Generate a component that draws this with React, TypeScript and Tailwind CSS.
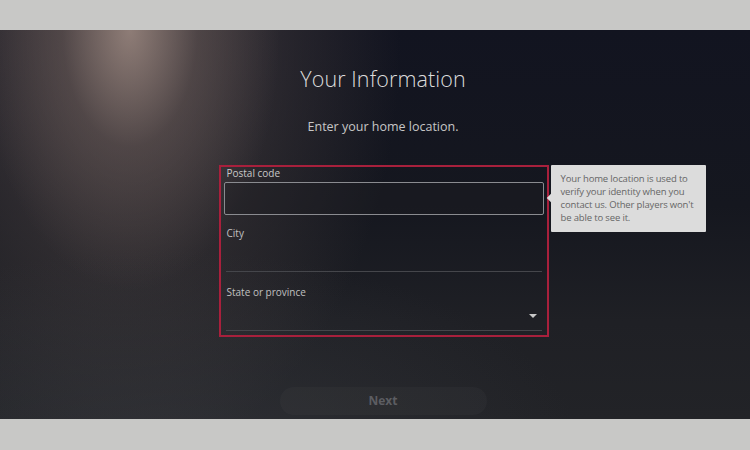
export default function App() {
  return (
    <div
      className="w-[750px] h-[450px] flex flex-col bg-[#c8c8c6] overflow-hidden"
      style={{ fontFamily: '"Open Sans", "Noto Sans", sans-serif' }}
    >
      <div className="h-[30px] shrink-0" />
      <div className="relative h-[389px] shrink-0 overflow-hidden bg-[linear-gradient(180deg,#121420_0%,#15171f_45%,#1f2025_75%,#222327_100%)]">
        {/* spotlight */}
        <div className="absolute inset-0 bg-[radial-gradient(ellipse_330px_500px_at_120px_10px,rgba(95,82,80,0.7),rgba(70,62,62,0.35)_55%,transparent_85%)]" />
        <div className="absolute inset-0 bg-[radial-gradient(ellipse_150px_260px_at_130px_0px,rgba(160,140,132,0.8),rgba(110,95,92,0.4)_45%,transparent_100%)]" />
        <div className="absolute inset-0 bg-[radial-gradient(ellipse_420px_200px_at_160px_420px,rgba(60,62,68,0.45),transparent_100%)]" />

        <div className="relative flex flex-col items-center pl-[16px]">
          <h1 className="mt-[33px] text-[21.5px] font-light text-[#dcdcdc] leading-[32px] tracking-[0.1px]">
            Your Information
          </h1>
          <p className="mt-[23px] text-[12.5px] text-[#c6c6c6] leading-[18px]">
            Enter your home location.
          </p>

          <div className="relative mt-[29px] ml-[1px] flex">
            <div className="w-[330px] h-[172px] border-2 border-[#a8203c] px-[3px] flex flex-col">
              <span className="mt-[-1px] ml-[3px] text-[10px] text-[#c8c8c8] leading-[14px]">Postal code</span>
              <div className="mt-[2px] h-[33px] rounded-[2px] border border-[#8a8b90] bg-[rgba(30,30,34,0.4)]" />
              <span className="mt-[11px] ml-[3px] text-[10px] text-[#c0c0c0] leading-[14px]">City</span>
              <div className="mt-[31px] mx-[2px] h-px bg-[#45464b]" />
              <span className="mt-[13px] ml-[3px] text-[10px] text-[#c0c0c0] leading-[14px]">State or province</span>
              <div className="mt-[15px] mr-[7px] flex justify-end">
                <svg width="8" height="5" viewBox="0 0 8 5">
                  <path d="M0 0h8L4 4z" fill="#c8c8c8" />
                </svg>
              </div>
              <div className="mt-[11px] mx-[2px] h-px bg-[#45464b]" />
            </div>

            <div className="absolute left-[332px] top-0 w-[155px] h-[67px] bg-[#dcdcdc] rounded-[1px] pl-[10px] pr-[4px] pt-[7px] text-[9.5px] leading-[13px] tracking-[-0.15px] text-[#666666]">
              <div className="absolute left-[-3px] top-[30px] w-[6px] h-[6px] rotate-45 bg-[#dcdcdc]" />
              Your home location is used to verify your identity when you contact us. Other players won't be able to see it.
            </div>
          </div>

          <div className="mt-[50px] w-[207px] h-[28px] rounded-full bg-[rgba(255,255,255,0.025)] flex items-center justify-center">
            <span className="text-[12px] font-bold text-[#5c5d62]">Next</span>
          </div>
        </div>
      </div>
      <div className="flex-1" />
    </div>
  );
}
